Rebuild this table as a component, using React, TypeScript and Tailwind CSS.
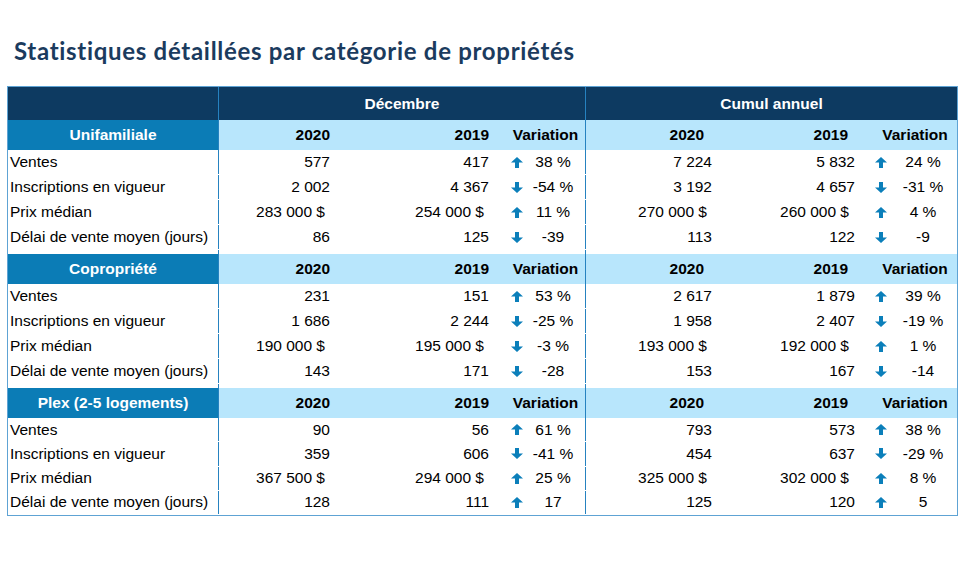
import React from 'react'

type Cell = { v: string; d?: boolean }
type Side = { a: Cell; b: Cell; up: boolean; pct: string }
type Row = { label: string; dec: Side; cum: Side }
type Block = { title: string; rows: Row[] }

const n = (v: string): Cell => ({ v })
const m = (v: string): Cell => ({ v, d: true })

const BLOCKS: Block[] = [
  {
    title: 'Unifamiliale',
    rows: [
      { label: 'Ventes', dec: { a: n('577'), b: n('417'), up: true, pct: '38 %' }, cum: { a: n('7 224'), b: n('5 832'), up: true, pct: '24 %' } },
      { label: 'Inscriptions en vigueur', dec: { a: n('2 002'), b: n('4 367'), up: false, pct: '-54 %' }, cum: { a: n('3 192'), b: n('4 657'), up: false, pct: '-31 %' } },
      { label: 'Prix médian', dec: { a: m('283 000 $'), b: m('254 000 $'), up: true, pct: '11 %' }, cum: { a: m('270 000 $'), b: m('260 000 $'), up: true, pct: '4 %' } },
      { label: 'Délai de vente moyen (jours)', dec: { a: n('86'), b: n('125'), up: false, pct: '-39' }, cum: { a: n('113'), b: n('122'), up: false, pct: '-9' } },
    ],
  },
  {
    title: 'Copropriété',
    rows: [
      { label: 'Ventes', dec: { a: n('231'), b: n('151'), up: true, pct: '53 %' }, cum: { a: n('2 617'), b: n('1 879'), up: true, pct: '39 %' } },
      { label: 'Inscriptions en vigueur', dec: { a: n('1 686'), b: n('2 244'), up: false, pct: '-25 %' }, cum: { a: n('1 958'), b: n('2 407'), up: false, pct: '-19 %' } },
      { label: 'Prix médian', dec: { a: m('190 000 $'), b: m('195 000 $'), up: false, pct: '-3 %' }, cum: { a: m('193 000 $'), b: m('192 000 $'), up: true, pct: '1 %' } },
      { label: 'Délai de vente moyen (jours)', dec: { a: n('143'), b: n('171'), up: false, pct: '-28' }, cum: { a: n('153'), b: n('167'), up: false, pct: '-14' } },
    ],
  },
  {
    title: 'Plex (2-5 logements)',
    rows: [
      { label: 'Ventes', dec: { a: n('90'), b: n('56'), up: true, pct: '61 %' }, cum: { a: n('793'), b: n('573'), up: true, pct: '38 %' } },
      { label: 'Inscriptions en vigueur', dec: { a: n('359'), b: n('606'), up: false, pct: '-41 %' }, cum: { a: n('454'), b: n('637'), up: false, pct: '-29 %' } },
      { label: 'Prix médian', dec: { a: m('367 500 $'), b: m('294 000 $'), up: true, pct: '25 %' }, cum: { a: m('325 000 $'), b: m('302 000 $'), up: true, pct: '8 %' } },
      { label: 'Délai de vente moyen (jours)', dec: { a: n('128'), b: n('111'), up: true, pct: '17' }, cum: { a: n('125'), b: n('120'), up: true, pct: '5' } },
    ],
  },
]

function Arrow({ up }: { up: boolean }) {
  return (
    <svg width="12" height="11" viewBox="0 0 12 11">
      <path
        d={up ? 'M6 0 L12 5.5 L8 5.5 L8 11 L4 11 L4 5.5 L0 5.5 Z' : 'M6 11 L12 5.5 L8 5.5 L8 0 L4 0 L4 5.5 L0 5.5 Z'}
        fill="#0b7fba"
      />
    </svg>
  )
}

function DecCells({ s }: { s: Side }) {
  return (
    <div className="flex w-[367px] items-center border-l border-[#2682c0]">
      <div className={`w-[117px] text-right ${s.a.d ? 'pr-[11px]' : 'pr-[6px]'}`}>{s.a.v}</div>
      <div className={`w-[159px] text-right ${s.b.d ? 'pr-[11px]' : 'pr-[6px]'}`}>{s.b.v}</div>
      <div className="flex w-[32px] items-center justify-end pr-[4px]">
        <Arrow up={s.up} />
      </div>
      <div className="w-[52px] text-center">{s.pct}</div>
    </div>
  )
}

function CumCells({ s }: { s: Side }) {
  return (
    <div className="flex flex-1 items-center border-l border-[#2682c0]">
      <div className={`w-[132px] text-right ${s.a.d ? 'pr-[11px]' : 'pr-[6px]'}`}>{s.a.v}</div>
      <div className={`w-[143px] text-right ${s.b.d ? 'pr-[12px]' : 'pr-[6px]'}`}>{s.b.v}</div>
      <div className="flex w-[30px] items-center justify-end pr-[4px]">
        <Arrow up={s.up} />
      </div>
      <div className="w-[64px] text-center">{s.pct}</div>
    </div>
  )
}

function SubHeader({ title }: { title: string }) {
  return (
    <div className="flex h-[30px] bg-[#b8e6fc] font-bold">
      <div className="flex w-[210px] items-center justify-center bg-[#0b7cb6] text-white">{title}</div>
      <div className="flex w-[367px] items-center border-l border-[#2682c0]">
        <div className="w-[117px] pr-[6px] text-right">2020</div>
        <div className="w-[159px] pr-[6px] text-right">2019</div>
        <div className="w-[90px] pl-[11px] text-center">Variation</div>
      </div>
      <div className="flex flex-1 items-center border-l border-[#2682c0]">
        <div className="w-[132px] pr-[14px] text-right">2020</div>
        <div className="w-[143px] pr-[13px] text-right">2019</div>
        <div className="w-[96px] pl-[12px] text-center">Variation</div>
      </div>
    </div>
  )
}

function Spacer() {
  return (
    <div className="flex h-[4px]">
      <div className="w-[210px]" />
      <div className="w-[367px] border-l border-[#2682c0]" />
      <div className="flex-1 border-l border-[#2682c0]" />
    </div>
  )
}

export default function App() {
  return (
    <div className="h-[562px] w-[962px] bg-white font-['Liberation_Sans',Arial,sans-serif] text-black">
      <h1 className="pl-[14px] pt-[37px] font-['Lato',sans-serif] text-[24px] font-bold leading-[28px] tracking-[0.7px] text-[#1b3b5e]">
        Statistiques détaillées par catégorie de propriétés
      </h1>
      <div className="ml-[7px] mt-[21px] w-[951px] border border-[#5ea3d4] text-[15.5px] leading-[18px]">
        <div className="flex h-[33px] bg-[#0d3a61] font-bold text-white">
          <div className="w-[210px]" />
          <div className="flex w-[367px] items-center justify-center border-l border-[#2682c0]">Décembre</div>
          <div className="flex flex-1 items-center justify-center border-l border-[#2682c0]">Cumul annuel</div>
        </div>
        {BLOCKS.map((b, bi) => (
          <div key={b.title}>
            <SubHeader title={b.title} />
            {b.rows.map(r => (
              <div key={r.label} className={`flex pb-[1px] ${bi === 2 ? 'h-[24.25px]' : 'h-[25px]'}`}>
                <div className="flex w-[210px] items-center pl-[2px]">{r.label}</div>
                <DecCells s={r.dec} />
                <CumCells s={r.cum} />
              </div>
            ))}
            {bi < 2 && <Spacer />}
          </div>
        ))}
      </div>
    </div>
  )
}
